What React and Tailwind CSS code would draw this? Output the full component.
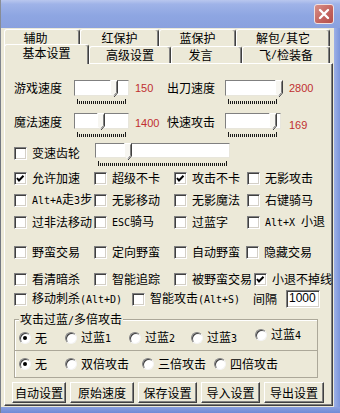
import React from 'react'

// raised / sunken edges, Windows classic style
const RAISED = 'border border-t-white border-l-white border-r-[#404040] border-b-[#404040] shadow-[inset_-1px_-1px_0_#808080]'
const SUNKEN = 'border border-t-[#808080] border-l-[#808080] border-r-white border-b-white shadow-[inset_1px_1px_0_#404040,inset_-1px_-1px_0_#d4d0c8]'

function Txt({ s }) {
  const parts = s.match(/[\x20-\x7e]+|[^\x20-\x7e]+/g) || []
  return parts.map((p, i) =>
    /[\x20-\x7e]/.test(p[0]) ? (
      <span key={i} className="font-['DejaVu_Sans_Mono',monospace] text-[10px]">{p.replace(/ /g, '\u00a0')}</span>
    ) : (
      <span key={i}>{p}</span>
    )
  )
}

function Check({ on }) {
  return (
    <span className={`block w-[13px] h-[13px] shrink-0 bg-white ${SUNKEN}`}>
      {on && (
        <svg width="11" height="11" viewBox="0 0 11 11" className="block">
          <polyline points="2,5 4,7.5 8.5,2.8" fill="none" stroke="#000" strokeWidth="2" />
        </svg>
      )}
    </span>
  )
}

function Cb({ label, on, w = '' }) {
  return (
    <div className={`flex items-center gap-[5px] shrink-0 ${w}`}>
      <Check on={on} />
      <span className="leading-[14px] whitespace-nowrap"><Txt s={label} /></span>
    </div>
  )
}

function Radio({ label, on, w = '', lift = '' }) {
  return (
    <div className={`flex items-center gap-[4px] shrink-0 ${w} ${lift}`}>
      <span className="flex items-center justify-center w-[12px] h-[12px] rounded-full bg-white border border-t-[#808080] border-l-[#808080] border-r-[#f4f4f4] border-b-[#f4f4f4] shadow-[inset_1px_1px_0_#404040]">
        {on && <span className="w-[4px] h-[4px] rounded-full bg-black" />}
      </span>
      <span className="leading-[14px] whitespace-nowrap"><Txt s={label} /></span>
    </div>
  )
}

function Thumb({ pos }) {
  return (
    <svg width="8" height="18" viewBox="0 0 8 18" className="absolute top-[-1px]" style={{ left: pos }}>
      <path d="M0.5 0.5H7.5V13L4 17L0.5 13Z" fill="#f7f6f1" />
      <path d="M0.5 13V0.5H7" fill="none" stroke="#fff" />
      <path d="M7.5 0.5V13L4 17" fill="none" stroke="#404040" />
      <path d="M6.5 1.5V12.6L4 15.5" fill="none" stroke="#808080" />
    </svg>
  )
}

// tick marks under a trackbar, drawn as one svg
function Ticks({ len }) {
  let d = `M0.5 0V5M${len - 0.5} 0V5`
  for (let x = 2.5; x < len - 1; x += 2) d += `M${x} 2V5`
  return (
    <svg width={len} height="5" viewBox={`0 0 ${len} 5`} className="block mt-[3px] ml-[3px]">
      <path d={d} stroke="#1a1a1a" strokeWidth="1" fill="none" />
    </svg>
  )
}

function Slider({ w, pos, len, h = 'h-[16px]' }) {
  return (
    <div className={`flex flex-col shrink-0 ${w}`}>
      <div className={`relative ${h} bg-white border border-t-[#808080] border-l-[#808080] border-r-[#e8e6dc] border-b-[#e8e6dc]`}>
        <Thumb pos={pos} />
      </div>
      <Ticks len={len} />
    </div>
  )
}

function Val({ v, cls = '' }) {
  return <span className={`shrink-0 font-['Liberation_Sans',sans-serif] text-[11px] leading-[16px] text-[#c03030] ${cls}`}>{v}</span>
}

const TOP_TABS = [
  { t: '辅助', w: 'w-[76px] pr-[13px]' },
  { t: '红保护', w: 'w-[79px]' },
  { t: '蓝保护', w: 'w-[77px]' },
  { t: '解包/其它', w: 'w-[94px]' },
]
const FRONT_TABS = [
  { t: '基本设置', w: 'w-[85px]', on: true },
  { t: '高级设置', w: 'w-[82px]' },
  { t: '发言', w: 'w-[71px] pr-[12px]' },
  { t: '飞/检装备', w: 'w-[88px]' },
]

export default function App() {
  return (
    <div className="w-[340px] h-[413px] flex overflow-hidden bg-[#ECE9D8] text-[12px] text-black font-['Noto_Sans_CJK_SC','Noto_Sans_CJK_JP',sans-serif]">
      <div className="w-[4px] h-full bg-[linear-gradient(180deg,#8a8f98,#6f747e_40%,#7a7f88)]" />
      <div className="flex-1 flex flex-col">
        {/* title bar */}
        <div className="h-[28px] shrink-0 flex justify-end items-start pt-[4px] pr-[6px] bg-[linear-gradient(180deg,#b9c7ee_0%,#9fb3e8_15%,#8ea6e2_55%,#8aa1de_100%)]">
          <div className="w-[20px] h-[20px] rounded-[3px] border border-[#f0e0e0] flex items-center justify-center bg-[linear-gradient(135deg,#d99088,#c2615c_60%,#b4504c)]">
            <svg width="12" height="12" viewBox="0 0 12 12">
              <path d="M2 2L10 10M10 2L2 10" stroke="#fff" strokeWidth="2.4" strokeLinecap="round" />
            </svg>
          </div>
        </div>

        <div className="flex-1 flex">
          <div className="flex-1 flex flex-col pl-[3px] pt-[1px] pr-[1px] pb-[1px]">
            {/* tabs */}
            <div className="flex h-[17px] shrink-0">
              {TOP_TABS.map(({ t, w }) => (
                <div key={t} className={`${w} h-[17px] flex items-center justify-center leading-[12px] border-t border-l border-r border-t-white border-l-white border-r-[#404040] rounded-t-[3px] shadow-[inset_-1px_0_0_#808080]`}>
                  <Txt s={t} />
                </div>
              ))}
            </div>
            <div className="flex items-end h-[17px] shrink-0">
              {FRONT_TABS.map(({ t, w, on }) => (
                <div
                  key={t}
                  className={`${w} flex items-center justify-center leading-[12px] border-t border-l border-r border-t-white border-l-white border-r-[#404040] rounded-t-[3px] shadow-[inset_-1px_0_0_#808080] bg-[#ECE9D8] ${on ? 'relative z-10 h-[20px] -mb-px pb-[3px]' : 'h-[17px]'}`}
                >
                  <Txt s={t} />
                </div>
              ))}
            </div>

            {/* panel */}
            <div className={`flex-1 flex flex-col pl-[9px] pt-[16px] ${RAISED}`}>
              <div className="flex items-start h-[33px] shrink-0">
                <span className="w-[60px] shrink-0 leading-[16px]">游戏速度</span>
                <Slider w="w-[55px]" pos={35} len={49} />
                <Val v="150" cls="w-[38px] pl-[6px]" />
                <span className="w-[58px] shrink-0 leading-[16px]">出刀速度</span>
                <Slider w="w-[56px]" pos={49} len={49} />
                <Val v="2800" cls="pl-[8px]" />
              </div>

              <div className="flex items-start h-[30px] shrink-0">
                <span className="w-[60px] shrink-0 leading-[16px] mt-[1px]">魔法速度</span>
                <Slider w="w-[55px]" pos={22} len={49} />
                <Val v="1400" cls="w-[38px] pl-[6px] mt-[2px]" />
                <span className="w-[58px] shrink-0 leading-[16px] mt-[1px]">快速攻击</span>
                <Slider w="w-[56px]" pos={43} len={49} />
                <Val v="169" cls="pl-[8px] mt-[4px]" />
              </div>

              <div className="flex items-start h-[24px] shrink-0">
                <div className="w-[81px] mt-[3px]"><Cb label="变速齿轮" /></div>
                <Slider w="w-[135px]" pos={28} len={129} h="h-[15px]" />
              </div>

              <div className="flex items-center h-[22px] shrink-0">
                <Cb label="允许加速" on w="w-[80px]" />
                <Cb label="超级不卡" w="w-[80px]" />
                <Cb label="攻击不卡" on w="w-[73px]" />
                <Cb label="无影攻击" />
              </div>
              <div className="flex items-center h-[22px] shrink-0">
                <Cb label="Alt+A走3步" w="w-[80px]" />
                <Cb label="无影移动" w="w-[80px]" />
                <Cb label="无影魔法" w="w-[73px]" />
                <Cb label="右键骑马" />
              </div>
              <div className="flex items-center h-[22px] shrink-0">
                <Cb label="过非法移动" w="w-[80px]" />
                <Cb label="ESC骑马" w="w-[80px]" />
                <Cb label="过蓝字" w="w-[73px]" />
                <Cb label="Alt+X 小退" />
              </div>
              <div className="flex items-center h-[22px] mt-[8px] shrink-0">
                <Cb label="野蛮交易" w="w-[80px]" />
                <Cb label="定向野蛮" w="w-[80px]" />
                <Cb label="自动野蛮" w="w-[72px]" />
                <Cb label="隐藏交易" />
              </div>
              <div className="flex items-center h-[22px] mt-[5px] shrink-0">
                <Cb label="看清暗杀" w="w-[80px]" />
                <Cb label="智能追踪" w="w-[80px]" />
                <Cb label="被野蛮交易" w="w-[80px]" />
                <Cb label="小退不掉线" on />
              </div>
              <div className="flex items-center h-[18px] shrink-0">
                <Cb label="移动刺杀(Alt+D)" w="w-[118px]" />
                <Cb label="智能攻击(Alt+S)" w="w-[121px]" />
                <span className="w-[33px] leading-[14px]">间隔</span>
                <div className={`w-[34px] h-[18px] bg-white pl-[2px] font-['Liberation_Sans',sans-serif] text-[12px] leading-[15px] ${SUNKEN}`}>1000</div>
              </div>

              {/* groups */}
              <div className="relative shrink-0 mt-[11px] w-[304px] h-[32px] border border-[#aca899] shadow-[inset_1px_1px_0_#fff] flex items-center pl-[4px] pt-[5px]">
                <span className="absolute left-[4px] top-[-8px] px-[1px] bg-[#ECE9D8] leading-[14px]"><Txt s="攻击过蓝/多倍攻击" /></span>
                <Radio label="无" on w="w-[46px]" />
                <Radio label="过蓝1" w="w-[64px]" />
                <Radio label="过蓝2" w="w-[62px]" />
                <Radio label="过蓝3" w="w-[64px]" />
                <Radio label="过蓝4" lift="-mt-[5px]" />
              </div>
              <div className="shrink-0 w-[304px] h-[27px] border border-t-0 border-[#aca899] shadow-[inset_1px_0_0_#fff] flex items-center pl-[4px]">
                <Radio label="无" on w="w-[46px]" />
                <Radio label="双倍攻击" w="w-[77px]" />
                <Radio label="三倍攻击" w="w-[72px]" />
                <Radio label="四倍攻击" />
              </div>

              <div className="flex gap-[4px] mt-[4px] -ml-[2px] shrink-0">
                {[
                  ['自动设置', 'w-[54px]'],
                  ['原始速度', 'w-[64px]'],
                  ['保存设置', 'w-[59px]'],
                  ['导入设置', 'w-[59px]'],
                  ['导出设置', 'w-[60px]'],
                ].map(([t, w]) => (
                  <div key={t} className={`${w} h-[21px] flex items-center justify-center leading-[14px] ${RAISED}`}>{t}</div>
                ))}
              </div>
            </div>
          </div>
          <div className="w-[6px] bg-[linear-gradient(90deg,#9db0e6,#7b95da)]" />
        </div>
        <div className="h-[6px] shrink-0 bg-[linear-gradient(180deg,#8aa0de,#6f8bd6)]" />
      </div>
    </div>
  )
}
